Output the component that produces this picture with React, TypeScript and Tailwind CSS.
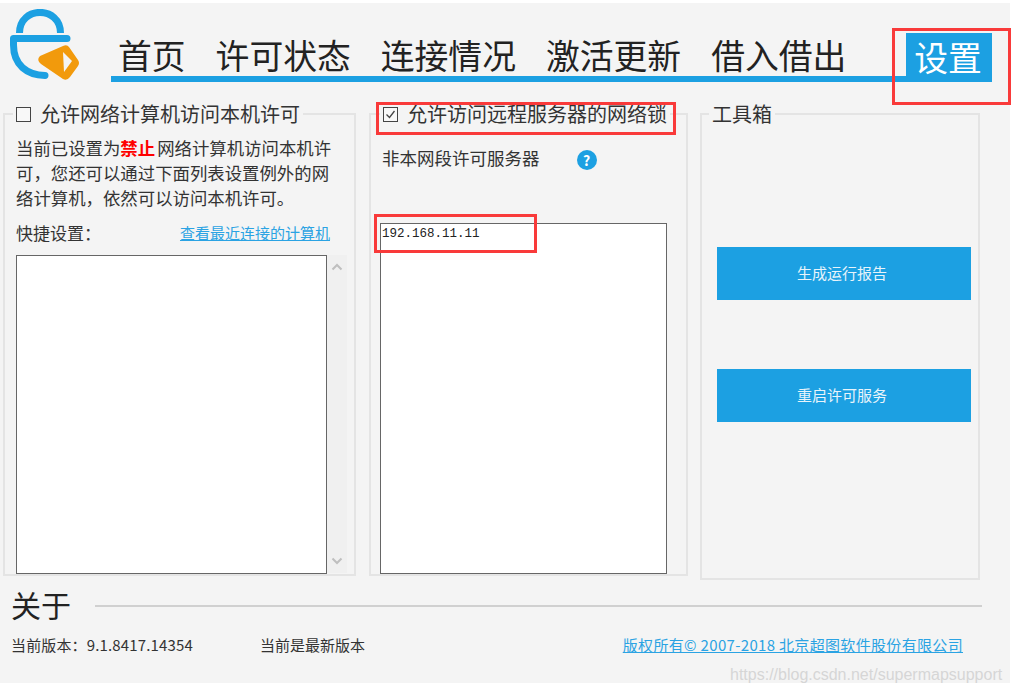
import React from 'react';

const NAV = ['首页', '许可状态', '连接情况', '激活更新', '借入借出'];
const FONT = "font-['Noto_Sans_CJK_SC','Noto_Sans',sans-serif]";

const Logo = () => (
  <svg width="72" height="72" viewBox="0 0 72 72" className="shrink-0">
    <path d="M10.5 24 C10.5 -3.5 51.5 -3.5 51.5 24" fill="none" stroke="#1ca0e2" strokeWidth="7" />
    <path d="M58 29.5 H4.5 V36 C4.5 56 18 66 36 66.5" fill="none" stroke="#1ca0e2" strokeWidth="7" strokeLinecap="round" strokeLinejoin="round" />
    <path d="M31 47 L54 37 Q58 35 60 38 L69 51 Q71 54 69 57 L61 68 Q58 72 54 70 L32 55 Q27 51 31 47 Z" fill="#f29a0c" />
    <path d="M54 43 L63 52 L55 63 Z" fill="#f4f4f4" />
  </svg>
);

const Scrollbar = () => (
  <div className="w-5 h-[318px] bg-[#f0f0f0] flex flex-col justify-between items-center py-2 shrink-0">
    <svg width="12" height="8" viewBox="0 0 12 8"><path d="M1.5 6.5 L6 2 L10.5 6.5" fill="none" stroke="#bfbfbf" strokeWidth="2" /></svg>
    <svg width="12" height="8" viewBox="0 0 12 8"><path d="M1.5 1.5 L6 6 L10.5 1.5" fill="none" stroke="#bfbfbf" strokeWidth="2" /></svg>
  </div>
);

const Checkbox = ({ checked }: { checked?: boolean }) => (
  <span className="w-[15px] h-[15px] border border-[#444] bg-[#f8f8f8] inline-flex items-center justify-center shrink-0">
    {checked && (
      <svg width="13" height="13" viewBox="0 0 13 13"><path d="M2.5 6.5 L5.5 9.5 L10.5 3" fill="none" stroke="#444" strokeWidth="1.3" /></svg>
    )}
  </span>
);

export default function App() {
  return (
    <div className={`relative w-[1012px] h-[695px] bg-white overflow-hidden pt-[3px] ${FONT} text-[#333]`}>
      <div className="relative w-[1010px] h-[680px] bg-[#f4f4f4] flex flex-col">
        {/* header */}
        <div className="flex h-[79px] pt-[6px] pl-[9px]">
          <Logo />
          <div className="flex items-end ml-[30px] h-[73px] w-[881px]">
            <div className="h-[49px] w-[795px] flex gap-[30px] pl-[7px] border-b-[6px] border-[#1ca0e2] text-[#222] text-[33.8px] leading-[43px] whitespace-nowrap">
              {NAV.map((n) => (
                <span key={n}>{n}</span>
              ))}
            </div>
            <div className="w-[86px] h-[49px] bg-[#1ca0e2] text-white text-[33.8px] leading-[47px] text-center pr-[2px]">设置</div>
          </div>
        </div>

        {/* panels */}
        <div className="flex pl-[3px] mt-[20px] items-start">
          <fieldset className="w-[353px] h-[474px] border-2 border-[#e4e4e4] pl-[11px] pr-[4px] min-w-0">
            <legend className="-ml-[3px] px-[3px] h-[24px] text-[20px] leading-[24px] text-[#333] flex items-center gap-[9px] whitespace-nowrap">
              <Checkbox />
              允许网络计算机访问本机许可
            </legend>
            <p className="text-[17.4px] leading-[25px] mt-[9px] w-[322px] break-all text-[#333]">
              当前已设置为<span className="text-[#f00] font-bold mr-[2px]">禁止</span>网络计算机访问本机许可，您还可以通过下面列表设置例外的网络计算机，依然可以访问本机许可。
            </p>
            <div className="flex justify-between items-center w-[314px] mt-[11px] h-[24px]">
              <span className="text-[17px]">快捷设置：</span>
              <span className="text-[15px] text-[#2ba3e3] underline whitespace-nowrap">查看最近连接的计算机</span>
            </div>
            <div className="flex mt-[10px]">
              <div className="w-[311px] h-[319px] bg-white border border-[#666] shrink-0"></div>
              <Scrollbar />
            </div>
          </fieldset>

          <fieldset className="w-[319px] h-[474px] ml-[13px] border-2 border-[#e4e4e4] pl-[9px] min-w-0">
            <legend className="ml-0 px-[3px] h-[24px] text-[20px] leading-[24px] text-[#333] flex items-center gap-[9px] whitespace-nowrap">
              <Checkbox checked />
              允许访问远程服务器的网络锁
            </legend>
            <div className="flex items-center h-[26px] mt-[19px] pl-[2px]">
              <span className="text-[17.5px] whitespace-nowrap">非本网段许可服务器</span>
              <span className="ml-[37px] mt-[4px] w-5 h-5 rounded-full bg-[#1ca0e2] text-white text-[14px] font-bold flex items-center justify-center">?</span>
            </div>
            <div className="w-[287px] h-[351px] mt-[52px] bg-white border border-[#666] px-[1px] pt-[3px]">
              <span className="font-['Liberation_Mono',monospace] text-[12.5px] leading-[14px] text-[#222] block">192.168.11.11</span>
            </div>
          </fieldset>

          <fieldset className="w-[280px] h-[478px] ml-[12px] border-2 border-[#e4e4e4] pl-[15px] min-w-0">
            <legend className="-ml-[8px] px-[3px] h-[24px] text-[20px] leading-[24px] text-[#333] whitespace-nowrap">工具箱</legend>
            <div className="flex flex-col gap-[69px] mt-[121px]">
              <div className="w-[254px] h-[53px] bg-[#1ca0e2] text-[#e8f4fb] text-[15px] flex items-center justify-center pr-[4px]">生成运行报告</div>
              <div className="w-[254px] h-[53px] bg-[#1ca0e2] text-[#e8f4fb] text-[15px] flex items-center justify-center pr-[4px]">重启许可服务</div>
            </div>
          </fieldset>
        </div>

        {/* about */}
        <div className="flex items-center pl-[11px] mt-[4px] h-[40px] w-[982px]">
          <span className="text-[30px] leading-[40px] text-[#222] whitespace-nowrap">关于</span>
          <div className="flex-1 h-[2px] bg-[#d0d0d0] ml-[24px] mt-[4px]"></div>
        </div>
        <div className="flex items-center pl-[11px] mt-[9px] h-[24px] w-[963px] text-[15px] whitespace-nowrap">
          <span className="w-[249px] tracking-[0.15px]">当前版本：9.1.8417.14354</span>
          <span>当前是最新版本</span>
          <span className="ml-auto text-[#2ba3e3] underline tracking-[0.33px]">版权所有© 2007-2018 北京超图软件股份有限公司</span>
        </div>

        {/* watermark */}
        <span className="absolute left-[730px] top-[662px] font-['Liberation_Sans',sans-serif] text-[16px] leading-[20px] text-[#d6d6d6] whitespace-nowrap">https://blog.csdn.net/supermapsupport</span>
      </div>

      {/* red annotation boxes */}
      <div className="absolute left-[892px] top-[28px] w-[119px] h-[77px] border-[3px] border-[#f93a3a]"></div>
      <div className="absolute left-[376px] top-[102px] w-[300px] h-[33px] border-[3px] border-[#f93a3a]"></div>
      <div className="absolute left-[374px] top-[214px] w-[163px] h-[39px] border-[3px] border-[#f93a3a]"></div>
    </div>
  );
}
